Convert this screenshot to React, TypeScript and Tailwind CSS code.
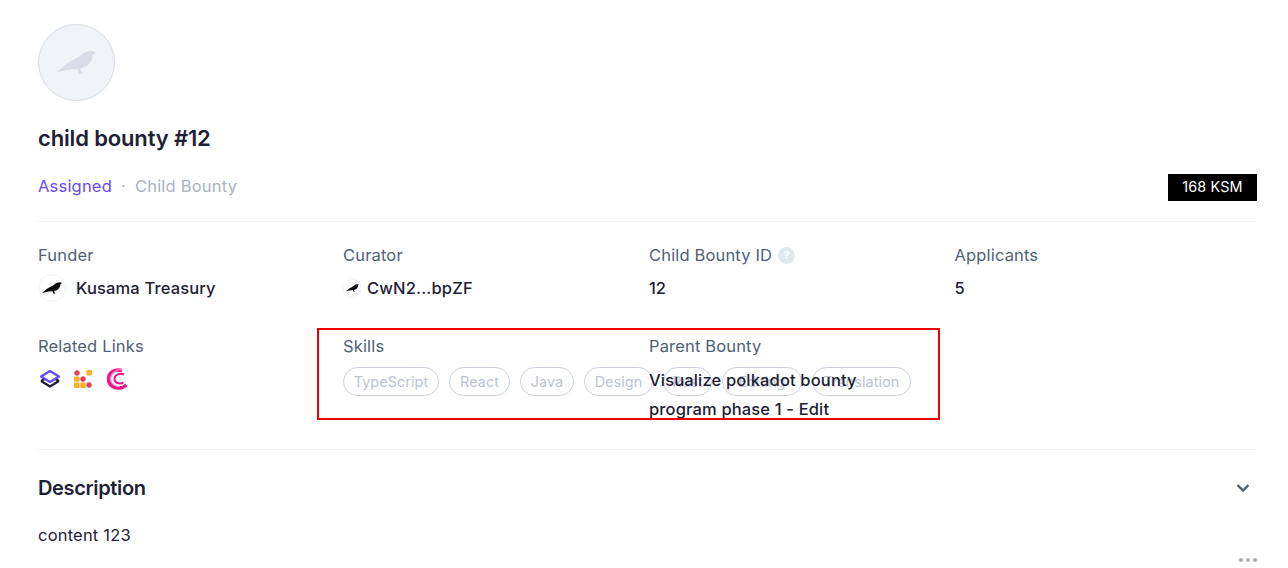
function Bird({ className, fill }: { className: string; fill: string }) {
  return (
    <svg className={className} viewBox="108 122 120 70" fill={fill}>
      <path d="M108 187 L138 162 C152 152 168 146 182 136 C192 126 204 122 214 122 C220 122 225 125 228 128 L219 133 C219 144 214 156 205 164 C198 170 190 173 181 175 L186 188 L193 190 L178 192 L172 177 L150 178 Z" />
    </svg>
  );
}

function Label({ children }: { children: React.ReactNode }) {
  return <div className="text-[16.5px] leading-6 tracking-[0.16px] text-[#506176]">{children}</div>;
}

function Tag({ children, w }: { children: string; w: string }) {
  return (
    <span className={`flex h-[29px] shrink-0 items-center justify-center rounded-full border border-[#c9d0dc] text-[14.4px] tracking-[0.08px] text-[#bcc4d1] ${w}`}>
      {children}
    </span>
  );
}

function LinkIcons() {
  return (
    <div className="mt-[10px] flex items-center gap-[12px]">
      <svg className="h-[20px] w-[24px]" viewBox="0 0 24 20" fill="none" strokeWidth="2.2" strokeLinejoin="round">
        <path d="M3 12 L12 17.5 L21 12" stroke="#1e2134" />
        <path d="M7 9.8 L3 12" stroke="#1e2134" />
        <path d="M17 9.8 L21 12" stroke="#1e2134" />
        <path d="M12 2 L21 7.5 L12 13 L3 7.5 Z" stroke="#6848ff" />
      </svg>
      <svg className="h-[18px] w-[18px]" viewBox="0 0 18 18">
        <circle cx="3" cy="3" r="2.7" fill="#e2425f" />
        <rect x="12.4" y="0" width="5.6" height="5.4" rx="1" fill="#f5b32b" />
        <rect x="0" y="6.4" width="5.6" height="5.4" rx="1" fill="#f5b32b" />
        <circle cx="9" cy="9" r="2.7" fill="#e2425f" />
        <rect x="0" y="12.6" width="5.6" height="5.4" rx="1" fill="#f5b32b" />
        <rect x="6.2" y="12.6" width="5.6" height="5.4" rx="1" fill="#f5b32b" />
        <circle cx="15" cy="15" r="2.7" fill="#e2425f" />
      </svg>
      <svg className="ml-[2px] h-[22px] w-[21px]" viewBox="0 0 21 22" fill="none">
        <path d="M16 2.5 C9 0.5 2.5 4.5 2.5 11 C2.5 17 8 21 14 20 C16.5 19.6 18.5 18.6 20.5 17" stroke="#f0148c" strokeWidth="3.4" />
        <path d="M16 1.5 C10 1 5 5 4.8 11 C4.7 15.5 9 19 14 18.5" stroke="#fa8cc8" strokeWidth="1.2" />
        <path d="M18 6.5 C14 4.6 8.5 6.5 8.5 11 C8.5 15 13.5 16.6 17.5 14.5" stroke="#f0148c" strokeWidth="2" />
      </svg>
    </div>
  );
}

export default function App() {
  return (
    <div
      className="relative h-[568px] w-[1288px] overflow-hidden bg-white pl-[38px] pr-[31px] pt-[24px] text-[16.5px] text-[#1e2134]"
      style={{ fontFamily: "Inter, 'Liberation Sans', sans-serif" }}
    >
      <div className="flex h-[77px] w-[77px] items-center justify-center rounded-full border border-[#d7dce6] bg-[#f0f3f8] pr-[1px]">
        <Bird className="h-[23px] w-[40px]" fill="#d7dce6" />
      </div>
      <h1 className="mt-[22px] text-[22px] font-semibold leading-[30px] tracking-[-0.15px]">child bounty #12</h1>

      <div className="mt-[20px] flex h-[28px] items-center justify-between">
        <div className="flex items-center pb-[2px] text-[16.5px] tracking-[0.2px]">
          <span className="text-[#6848ff]">Assigned</span>
          <span className="mx-[9px] text-[#a9b2c1]">·</span>
          <span className="text-[#a9b2c1]">Child Bounty</span>
        </div>
        <span className="flex h-[27px] w-[89px] items-center justify-center bg-black text-[14.4px] tracking-[0.12px] text-white">168 KSM</span>
      </div>

      <div className="mt-[20px] h-px bg-[#f0f3f8]" />

      <div className="mt-[21px] grid grid-cols-[305px_306px_305.5px_1fr]">
        <div>
          <Label>Funder</Label>
          <div className="mt-[7px] flex h-[28px] items-center">
            <span className="flex h-[28px] w-[28px] items-center justify-center rounded-full border border-[#f0f3f8]">
              <Bird className="h-[12px] w-[20px]" fill="#0a0a0a" />
            </span>
            <span className="ml-[10px] font-[450] tracking-[0.15px]">Kusama Treasury</span>
          </div>
        </div>
        <div>
          <Label>Curator</Label>
          <div className="mt-[7px] flex h-[28px] items-center">
            <span className="flex h-[19px] w-[19px] items-center justify-center rounded-full border border-[#f0f3f8]">
              <Bird className="h-[8px] w-[13px]" fill="#0a0a0a" />
            </span>
            <span className="ml-[5px] font-[450] tracking-[0.15px]">CwN2...bpZF</span>
          </div>
        </div>
        <div>
          <div className="flex items-center">
            <Label>Child Bounty ID</Label>
            <span className="ml-[6px] flex h-[17px] w-[17px] items-center justify-center rounded-full bg-[#e2e8f0] text-[11px] font-bold text-white">?</span>
          </div>
          <div className="mt-[7px] flex h-[28px] items-center font-[450]">12</div>
        </div>
        <div>
          <Label>Applicants</Label>
          <div className="mt-[7px] flex h-[28px] items-center font-[450]">5</div>
        </div>
      </div>

      <div className="mt-[32px] grid grid-cols-[305px_306px_305.5px_1fr]">
        <div>
          <Label>Related Links</Label>
          <LinkIcons />
        </div>
        <div>
          <Label>Skills</Label>
          <div className="mt-[9px] flex gap-[10px]">
            <Tag w="w-[96px]">TypeScript</Tag>
            <Tag w="w-[61px]">React</Tag>
            <Tag w="w-[54px]">Java</Tag>
            <Tag w="w-[69px]">Design</Tag>
            <Tag w="w-[49px]">Rust</Tag>
            <Tag w="w-[80px]">Editing</Tag>
            <Tag w="w-[99px]">Translation</Tag>
          </div>
        </div>
        <div className="relative">
          <Label>Parent Bounty</Label>
          <div className="mt-[8px] w-[240px] font-[450] leading-[29px] tracking-[0.15px]">
            Visualize polkadot bounty program phase 1 - Edit
          </div>
        </div>
        <div />
      </div>

      <div className="mt-[25px] h-px bg-[#f0f3f8]" />

      <div className="mt-[23px] flex h-[30px] items-center justify-between">
        <h2 className="text-[20px] font-semibold tracking-[-0.35px]">Description</h2>
        <svg className="mr-[7px] h-[10px] w-[14px]" viewBox="0 0 14 10" fill="none">
          <path d="M1.5 2 L7 7.5 L12.5 2" stroke="#506176" strokeWidth="2.4" />
        </svg>
      </div>
      <div className="mt-[20px] leading-6 tracking-[0.2px]">content 123</div>

      <div className="absolute left-[1239px] top-[558px] flex gap-[3px]">
        <span className="h-[4px] w-[4px] rounded-full bg-[#a9b2c1]" />
        <span className="h-[4px] w-[4px] rounded-full bg-[#a9b2c1]" />
        <span className="h-[4px] w-[4px] rounded-full bg-[#a9b2c1]" />
      </div>

      <div className="pointer-events-none absolute left-[317px] top-[328px] h-[92px] w-[623px] border-2 border-[#f00000]" />
    </div>
  );
}
